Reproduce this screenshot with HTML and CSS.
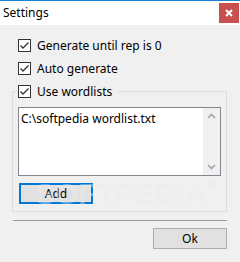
FILE: index.html
```html
<!DOCTYPE html>
<html lang="en">
<head>
    <meta charset="UTF-8">
    <title>Settings</title>
    <link rel="stylesheet" href="styles.css">
</head>
<body>
    <div class="window">
        <div class="titlebar">
            <span class="title">Settings</span>
            <span class="close">
                <svg width="8" height="8" viewBox="0 0 8 8"><path d="M1 1L7 7M7 1L1 7" stroke="#fff" stroke-width="2"/></svg>
            </span>
        </div>

        <div class="content">
            <label class="check">
                <span class="box"><svg width="11" height="11" viewBox="0 0 11 11"><path d="M1.5 5.5L4 8L9.5 2.5" fill="none" stroke="#333" stroke-width="1.3"/></svg></span>
                Generate until rep is 0
            </label>
            <label class="check">
                <span class="box"><svg width="11" height="11" viewBox="0 0 11 11"><path d="M1.5 5.5L4 8L9.5 2.5" fill="none" stroke="#333" stroke-width="1.3"/></svg></span>
                Auto generate
            </label>

            <fieldset class="group">
                <legend>
                    <label class="check">
                        <span class="box"><svg width="11" height="11" viewBox="0 0 11 11"><path d="M1.5 5.5L4 8L9.5 2.5" fill="none" stroke="#333" stroke-width="1.3"/></svg></span>
                        Use wordlists
                    </label>
                </legend>
                <div class="listbox">
                    <div class="items">
                        <div class="item">C:\softpedia wordlist.txt</div>
                    </div>
                    <div class="scrollbar">
                        <svg width="17" height="17" viewBox="0 0 17 17"><path d="M5 10L8.5 6.5L12 10" fill="none" stroke="#a3a3a3" stroke-width="1.6"/></svg>
                        <svg width="17" height="17" viewBox="0 0 17 17"><path d="M5 7L8.5 10.5L12 7" fill="none" stroke="#a3a3a3" stroke-width="1.6"/></svg>
                    </div>
                </div>
                <button class="btn btn-default">Add</button>
            </fieldset>

            <div class="separator"></div>

            <div class="footer">
                <button class="btn">Ok</button>
            </div>
        </div>

        <div class="watermark">SOFTPEDIA<span class="reg">®</span></div>
    </div>
</body>
</html>
```

FILE: styles.css
```css
body {
    margin: 0;
    font-family: "Noto Sans", "Liberation Sans", sans-serif;
    font-size: 12px;
    color: #000;
}
.window {
    position: relative;
    width: 240px;
    height: 262px;
    background-color: #f0f0f0;
    border-top: 1px solid #1883d7;
    box-sizing: border-box;
    overflow: hidden;
}
.titlebar {
    display: flex;
    justify-content: space-between;
    align-items: flex-start;
    height: 24px;
    background-color: #fff;
}
.title {
    padding-left: 3px;
    line-height: 24px;
    font-size: 12px;
}
.close {
    display: flex;
    align-items: center;
    justify-content: center;
    width: 20px;
    height: 20px;
    margin-top: 2px;
    margin-right: 1px;
    background-color: #c75050;
}
.content {
    padding: 9px 13px 0 12px;
}
.check {
    display: flex;
    align-items: center;
    height: 23px;
    margin-left: 6px;
    white-space: nowrap;
}
.box {
    display: flex;
    align-items: center;
    justify-content: center;
    width: 11px;
    height: 11px;
    margin-right: 6px;
    border: 1px solid #333;
    background-color: #fff;
}
.group {
    margin: 0;
    padding: 0 5px 7px 5px;
    border: 1px solid #dcdcdc;
    min-width: 0;
}
.group legend {
    padding: 0 6px 0 0;
    margin: 0;
}
.group legend .check {
    margin-left: 0;
}
.listbox {
    display: flex;
    height: 67px;
    margin-top: 4px;
    border: 1px solid #828790;
    background-color: #fff;
}
.items {
    flex: 1;
    padding: 3px 2px;
}
.item {
    line-height: 15px;
}
.scrollbar {
    display: flex;
    flex-direction: column;
    justify-content: space-between;
    width: 17px;
    background-color: #f0f0f0;
}
.btn {
    width: 74px;
    height: 21px;
    padding: 0;
    font-family: inherit;
    font-size: 12px;
    color: #000;
    background-color: #e1e1e1;
    border: 1px solid #adadad;
}
.btn-default {
    margin: 7px 0 0 1px;
    border: 2px solid #0078d7;
}
.separator {
    margin-top: 8px;
    margin-left: 1px;
    height: 1px;
    background-color: #999;
}
.footer {
    display: flex;
    justify-content: flex-end;
    padding-top: 7px;
}
.watermark {
    position: absolute;
    left: 35px;
    top: 176px;
    font-family: "Liberation Sans", sans-serif;
    font-weight: bold;
    font-size: 30px;
    color: rgba(255, 255, 255, 0.4);
    text-shadow: 0 0 1px rgba(0, 0, 0, 0.05);
    pointer-events: none;
}
.watermark .reg {
    font-size: 12px;
    vertical-align: top;
}
```
